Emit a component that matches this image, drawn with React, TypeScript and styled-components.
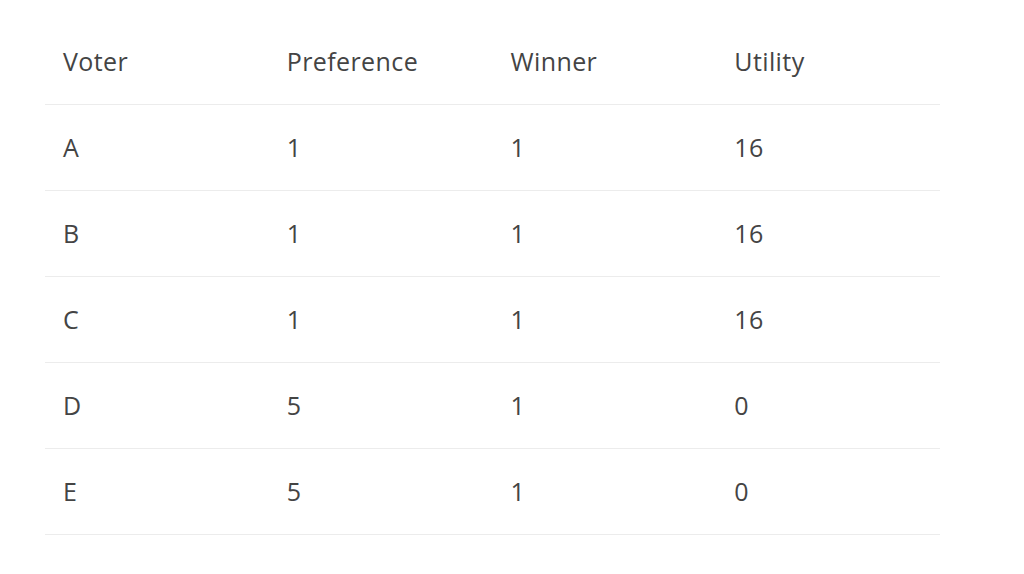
import React from "react";
import styled, { createGlobalStyle } from "styled-components";

const GlobalStyle = createGlobalStyle`
  html, body { margin: 0; padding: 0; background: #ffffff; }
  body { font-family: "Open Sans", "Liberation Sans", sans-serif; }
`;

const Page = styled.div`
  padding: 19px 0 0 45px;
`;

const Table = styled.table`
  width: 895px;
  border-collapse: collapse;
  table-layout: fixed;
  color: #444444;
  font-size: 25px;
  letter-spacing: 0.4px;
`;

const HeadCell = styled.th`
  height: 83px;
  padding: 0 0 2px 18px;
  text-align: left;
  font-weight: 400;
  border-bottom: 1px solid #ececec;
  vertical-align: middle;
`;

const Cell = styled.td`
  height: 83px;
  padding: 0 0 2px 18px;
  text-align: left;
  border-bottom: 1px solid #ececec;
  vertical-align: middle;
`;

const rows: [string, number, number, number][] = [
  ["A", 1, 1, 16],
  ["B", 1, 1, 16],
  ["C", 1, 1, 16],
  ["D", 5, 1, 0],
  ["E", 5, 1, 0],
];

export default function App() {
  return (
    <Page>
      <GlobalStyle />
      <Table>
        <thead>
          <tr>
            <HeadCell>Voter</HeadCell>
            <HeadCell>Preference</HeadCell>
            <HeadCell>Winner</HeadCell>
            <HeadCell>Utility</HeadCell>
          </tr>
        </thead>
        <tbody>
          {rows.map((r) => (
            <tr key={r[0]}>
              <Cell>{r[0]}</Cell>
              <Cell>{r[1]}</Cell>
              <Cell>{r[2]}</Cell>
              <Cell>{r[3]}</Cell>
            </tr>
          ))}
        </tbody>
      </Table>
    </Page>
  );
}
